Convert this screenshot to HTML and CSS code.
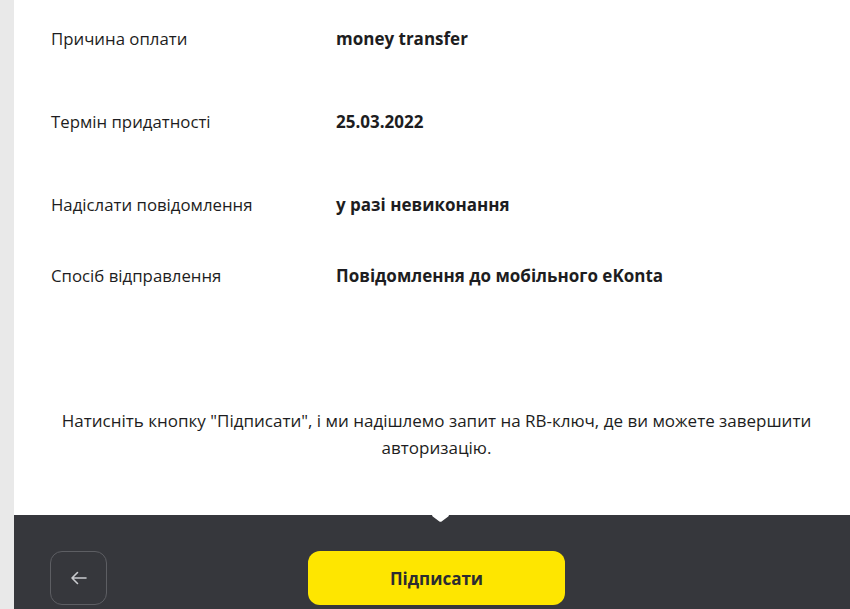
FILE: index.html
```html
<!DOCTYPE html>
<html lang="uk">
<head>
<meta charset="utf-8">
<title>Підтвердження</title>
<link rel="stylesheet" href="styles.css">
</head>
<body>
<div class="page">
  <div class="side"></div>
  <div class="main">
    <div class="content">
      <div class="details">
        <div class="row">
          <div class="label">Причина оплати</div>
          <div class="value">money transfer</div>
        </div>
        <div class="row">
          <div class="label">Термін придатності</div>
          <div class="value">25.03.2022</div>
        </div>
        <div class="row">
          <div class="label">Надіслати повідомлення</div>
          <div class="value">у разі невиконання</div>
        </div>
        <div class="row">
          <div class="label">Спосіб відправлення</div>
          <div class="value">Повідомлення до мобільного eKonta</div>
        </div>
      </div>
      <p class="note">Натисніть кнопку "Підписати", і ми надішлемо запит на RB-ключ, де ви можете завершити авторизацію.</p>
    </div>
    <div class="footer">
      <div class="notch"></div>
      <button class="back" type="button" aria-label="Назад">
        <svg width="18" height="14" viewBox="0 0 18 14" fill="none" stroke="#c9cace" stroke-width="1.6" stroke-linecap="round" stroke-linejoin="round">
          <path d="M16 7H2M7.5 1.5L2 7l5.5 5.5"/>
        </svg>
      </button>
      <button class="sign" type="button">Підписати</button>
    </div>
  </div>
</div>
</body>
</html>
```
FILE: styles.css
```css
* { box-sizing: border-box; }
html, body { margin: 0; padding: 0; height: 100%; }
body {
  font-family: "Open Sans", "Noto Sans", sans-serif;
  color: #1d1d21;
  background: #ffffff;
}
.page {
  display: flex;
  height: 609px;
  overflow: hidden;
}
.side {
  width: 14px;
  flex: none;
  background: #e9e9e9;
}
.main {
  flex: 1;
  display: flex;
  flex-direction: column;
}
.content {
  flex: 1;
  padding: 27px 0 0 37px;
}
.details {
  display: flex;
  flex-direction: column;
  gap: 59px;
}
.row {
  display: grid;
  grid-template-columns: 285px 1fr;
  line-height: 24px;
}
.row:last-child { margin-top: -12px; }
.label { font-weight: 400; font-size: 16.8px; }
.value { font-weight: 700; font-size: 17px; }
.note {
  margin: 119px 0 0 -37px;
  padding: 0 16px 0 25px;
  text-align: center;
  font-size: 17px;
  line-height: 27px;
}
.footer {
  position: relative;
  height: 94px;
  flex: none;
  background: #36373c;
  display: flex;
  align-items: flex-start;
  padding: 36px 0 0 36px;
}
.notch {
  position: absolute;
  left: 419.5px;
  top: -6.5px;
  width: 13px;
  height: 13px;
  background: #ffffff;
  transform: scaleY(0.75) rotate(45deg);
  border-radius: 2px;
}
.back {
  width: 57px;
  height: 54px;
  border: 1px solid #5d5e63;
  border-radius: 12px;
  background: transparent;
  display: flex;
  align-items: center;
  justify-content: center;
  padding: 0;
}
.sign {
  margin-left: 201px;
  width: 257px;
  height: 54px;
  border: none;
  border-radius: 12px;
  background: #fee600;
  color: #2b2c31;
  font-family: "Open Sans", "Noto Sans", sans-serif;
  font-weight: 700;
  font-size: 17px;
}
```
